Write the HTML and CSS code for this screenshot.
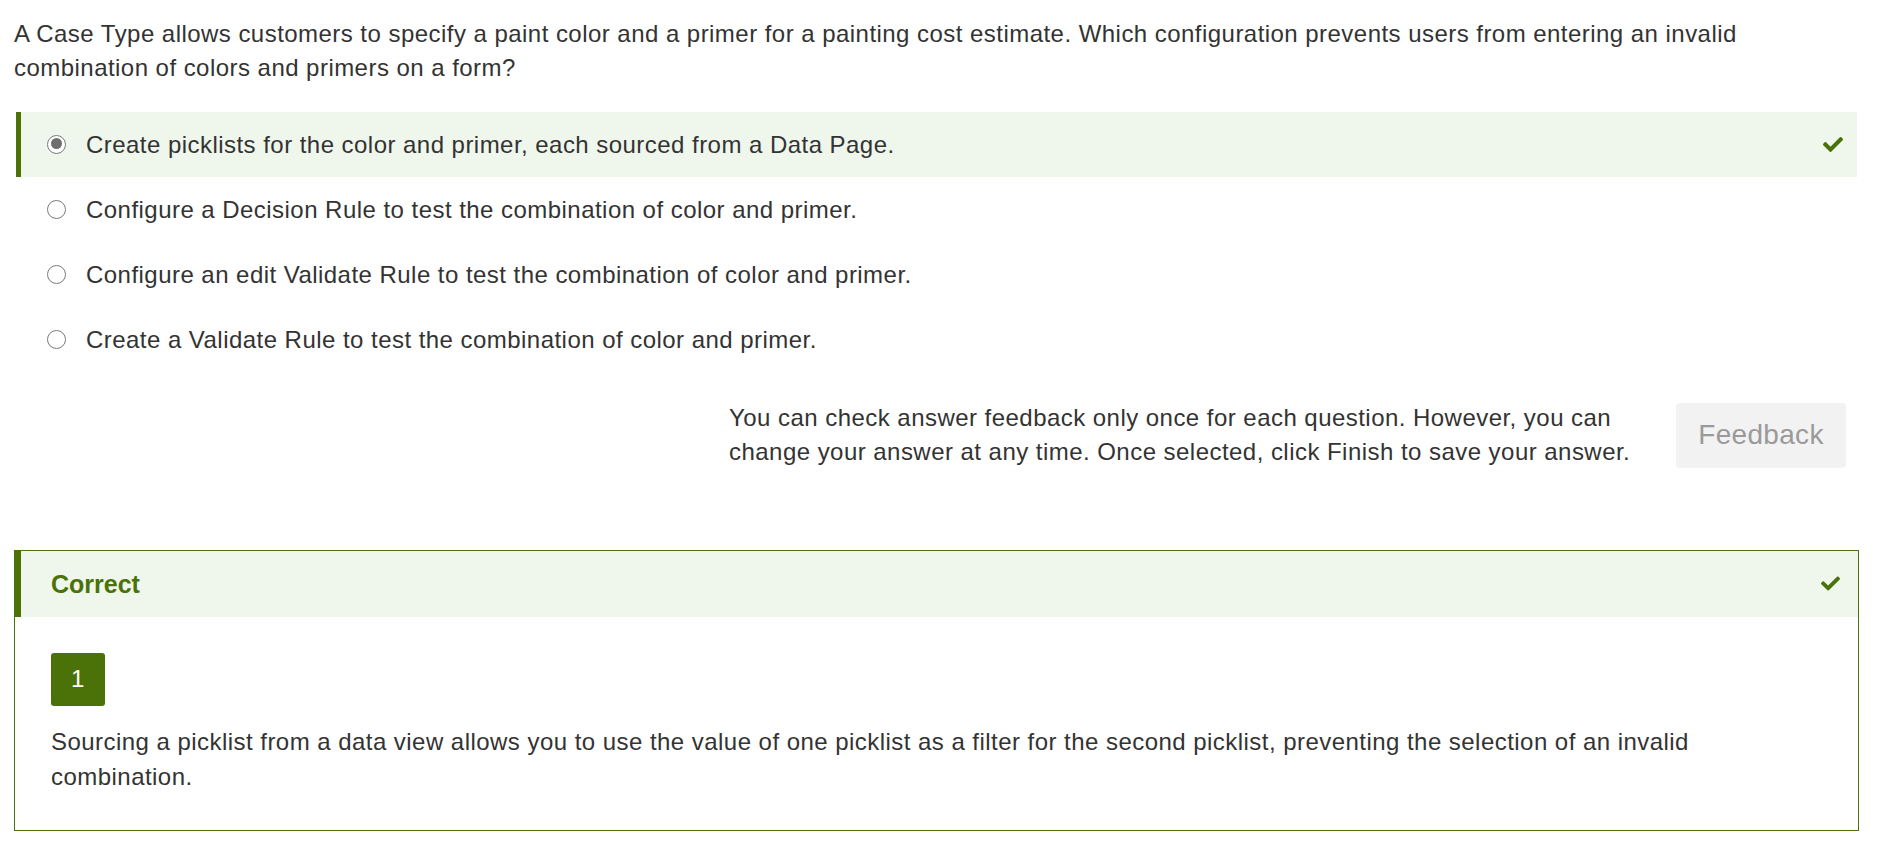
FILE: index.html
```html
<!DOCTYPE html>
<html lang="en">
<head>
<meta charset="utf-8">
<title>Question</title>
<link rel="stylesheet" href="styles.css">
</head>
<body>
<div class="page">
  <p class="question">A Case Type allows customers to specify a paint color and a primer for a painting cost estimate. Which configuration prevents users from entering an invalid combination of colors and primers on a form?</p>

  <div class="options">
    <div class="option selected">
      <span class="radio checked"></span>
      <span class="option-text">Create picklists for the color and primer, each sourced from a Data Page.</span>
      <svg class="check" viewBox="0 64 512 384" aria-hidden="true"><path d="M173.898 439.404l-166.4-166.4c-9.997-9.997-9.997-26.206 0-36.204l36.203-36.204c9.997-9.998 26.207-9.998 36.204 0L192 312.69 432.095 72.596c9.997-9.997 26.207-9.997 36.204 0l36.203 36.204c9.997 9.997 9.997 26.206 0 36.204l-294.4 294.401c-9.998 9.997-26.207 9.997-36.204-.001z"/></svg>
    </div>
    <div class="option">
      <span class="radio"></span>
      <span class="option-text">Configure a Decision Rule to test the combination of color and primer.</span>
    </div>
    <div class="option">
      <span class="radio"></span>
      <span class="option-text">Configure an edit Validate Rule to test the combination of color and primer.</span>
    </div>
    <div class="option">
      <span class="radio"></span>
      <span class="option-text">Create a Validate Rule to test the combination of color and primer.</span>
    </div>
  </div>

  <div class="feedback-row">
    <p class="feedback-note">You can check answer feedback only once for each question. However, you can change your answer at any time. Once selected, click Finish to save your answer.</p>
    <button class="feedback-btn" type="button">Feedback</button>
  </div>

  <div class="result">
    <div class="result-head">
      <span class="result-title">Correct</span>
      <svg class="check check-head" viewBox="0 64 512 384" aria-hidden="true"><path d="M173.898 439.404l-166.4-166.4c-9.997-9.997-9.997-26.206 0-36.204l36.203-36.204c9.997-9.998 26.207-9.998 36.204 0L192 312.69 432.095 72.596c9.997-9.997 26.207-9.997 36.204 0l36.203 36.204c9.997 9.997 9.997 26.206 0 36.204l-294.4 294.401c-9.998 9.997-26.207 9.997-36.204-.001z"/></svg>
    </div>
    <div class="result-body">
      <div class="badge">1</div>
      <p class="explanation">Sourcing a picklist from a data view allows you to use the value of one picklist as a filter for the second picklist, preventing the selection of an invalid combination.</p>
    </div>
  </div>
</div>
</body>
</html>
```

FILE: styles.css
```css
html, body {
  margin: 0;
  padding: 0;
  background: #ffffff;
}

body {
  font-family: "Liberation Sans", Arial, sans-serif;
  font-size: 24px;
  line-height: 34.3px;
  letter-spacing: 0.46px;
  color: #333333;
}

.page {
  padding: 17px 18px 0 14px;
}

.question {
  margin: 0 0 26px 0;
}

.options {
  margin: 0 2px;
  display: flex;
  flex-direction: column;
}

.option {
  height: 65px;
  display: flex;
  align-items: center;
  border-left: 5px solid transparent;
  padding-left: 26px;
  padding-right: 14px;
}

.option.selected {
  background: #eff7ec;
  border-left-color: #4a7208;
}

.option-text {
  flex: 1 1 auto;
  padding-top: 2px;
}

.radio {
  flex: 0 0 auto;
  width: 19px;
  height: 19px;
  box-sizing: border-box;
  border: 1.5px solid #7a7a7a;
  border-radius: 50%;
  background: #ffffff;
  margin-right: 20px;
  position: relative;
}

.radio.checked::after {
  content: "";
  position: absolute;
  left: 2.5px;
  top: 2.5px;
  width: 11px;
  height: 11px;
  border-radius: 50%;
  background: #6e6e6e;
}

.check {
  flex: 0 0 auto;
  width: 20px;
  height: 15px;
  fill: #4a7208;
}

.feedback-row {
  margin-top: 29px;
  display: flex;
  justify-content: flex-end;
  align-items: center;
  padding-right: 13px;
}

.feedback-note {
  margin: 0 27px 0 0;
  width: 920px;
  line-height: 34.5px;
}

.feedback-btn {
  flex: 0 0 auto;
  width: 170px;
  height: 65px;
  border: none;
  border-radius: 4px;
  background: #f2f2f2;
  color: #9a9a9a;
  font-family: "Liberation Sans", Arial, sans-serif;
  font-size: 28px;
  letter-spacing: 0.3px;
  padding: 0;
}

.result {
  margin-top: 80px;
  border: 1px solid #4a7208;
}

.result-head {
  height: 66px;
  background: #eff7ec;
  border-left: 6px solid #4a7208;
  display: flex;
  align-items: center;
  padding-left: 30px;
  padding-right: 18px;
}

.result-title {
  flex: 1 1 auto;
  font-weight: bold;
  font-size: 25px;
  letter-spacing: 0;
  color: #4a7208;
  padding-top: 2px;
}

.check-head {
  width: 19px;
  height: 15px;
}

.result-body {
  padding: 36px 37px 36px 36px;
}

.badge {
  width: 54px;
  height: 53px;
  border-radius: 3px;
  background: #4a7208;
  color: #ffffff;
  display: flex;
  align-items: center;
  justify-content: center;
  font-size: 24px;
}

.explanation {
  margin: 18.5px 0 0 0;
  line-height: 35px;
}
```
